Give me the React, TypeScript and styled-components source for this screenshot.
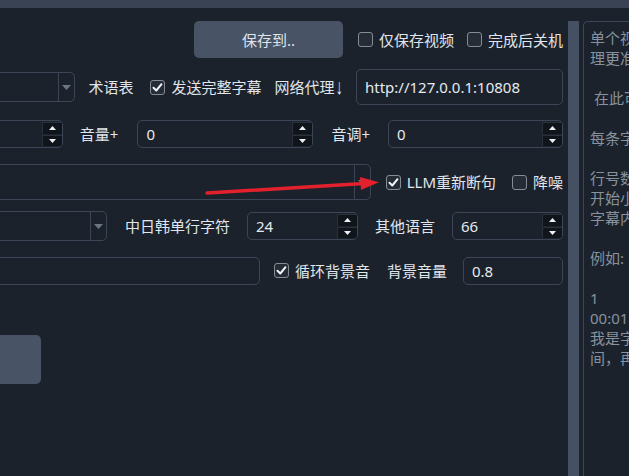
import React from "react";
import styled, { createGlobalStyle } from "styled-components";

const FONT = `"Noto Sans", "Noto Sans CJK SC", sans-serif`;

const Global = createGlobalStyle`
  html, body { margin: 0; padding: 0; background: #1b222c; overflow: hidden; }
  * { box-sizing: border-box; }
`;

const Page = styled.div`
  position: relative;
  width: 629px;
  height: 476px;
  overflow: hidden;
  background: #1b222c;
  font-family: ${FONT};
  font-size: 15px;
  color: #e1e6ec;
`;

const TopBar = styled.div`
  height: 8px;
  background: #3a4353;
`;

const Main = styled.div`
  display: flex;
  height: 468px;
  padding-top: 13px;
`;

const LeftPanel = styled.div`
  margin-left: -20px;
  width: 583px;
  flex: none;
  display: flex;
  flex-direction: column;
`;

const Row = styled.div<{ $h: number; $mt?: number }>`
  display: flex;
  align-items: center;
  height: ${(p) => p.$h}px;
  margin-top: ${(p) => p.$mt ?? 0}px;
`;

const Spacer = styled.div`
  flex: 1;
`;

const Button = styled.div<{ $w: number; $h: number; $ml?: number }>`
  width: ${(p) => p.$w}px;
  height: ${(p) => p.$h}px;
  margin-left: ${(p) => p.$ml ?? 0}px;
  background: #485365;
  border-radius: 5px;
  display: flex;
  align-items: center;
  justify-content: center;
  color: #dfe4ea;
  flex: none;
`;

const Label = styled.span<{ $ml?: number }>`
  margin-left: ${(p) => p.$ml ?? 0}px;
  white-space: nowrap;
  line-height: 20px;
  flex: none;
  display: flex;
  align-items: center;
`;

const NarrowGlyph = styled.span`
  display: inline-block;
  font-family: "Liberation Sans", sans-serif;
  font-size: 15px;
  line-height: 20px;
  margin-left: 1px;
  transform: scaleY(1.45) translateY(-0.5px);
`;

const CheckWrap = styled.label<{ $ml?: number }>`
  display: flex;
  align-items: center;
  gap: 6px;
  margin-left: ${(p) => p.$ml ?? 0}px;
  white-space: nowrap;
  line-height: 20px;
  flex: none;
`;

const Box = styled.span`
  width: 15px;
  height: 15px;
  border: 1px solid #868c95;
  border-radius: 3px;
  background: #252c36;
  display: flex;
  align-items: center;
  justify-content: center;
`;

const Field = styled.div<{ $w?: number; $h: number; $ml?: number }>`
  ${(p) => (p.$w ? `width: ${p.$w}px; flex: none;` : `flex: 1;`)}
  height: ${(p) => p.$h}px;
  margin-left: ${(p) => p.$ml ?? 0}px;
  border: 1px solid #3c4656;
  border-radius: 5px;
  display: flex;
  align-items: stretch;
  overflow: hidden;
`;

const FieldText = styled.div`
  flex: 1;
  display: flex;
  align-items: center;
  padding-left: 8px;
  white-space: nowrap;
  color: #e6eaef;
`;

const DropPart = styled.div`
  width: 16px;
  border-left: 1px solid #3c4656;
  display: flex;
  align-items: center;
  justify-content: center;
`;

const SpinCol = styled.div`
  width: 20px;
  display: flex;
  flex-direction: column;
  justify-content: center;
  gap: 1px;
  padding: 1px 0;
`;

const SpinBtn = styled.div`
  flex: 1;
  background: #10151b;
  border-top: 1px solid #2a313b;
  border-left: 1px solid #2a313b;
  display: flex;
  align-items: center;
  justify-content: center;
`;

const Splitter = styled.div`
  width: 11px;
  margin-left: 5px;
  background: #465063;
  flex: none;
`;

const TextPanel = styled.div`
  margin-left: 4px;
  flex: 1;
  min-width: 0;
  border: 1px solid #3c4656;
  border-right: none;
  border-bottom: none;
  border-radius: 5px 0 0 0;
  padding: 6px 0 0 6px;
  color: #88929e;
  white-space: pre;
  line-height: 20px;
  overflow: hidden;
`;

const Overlay = styled.svg`
  position: absolute;
  left: 0;
  top: 0;
  pointer-events: none;
`;

const Check = ({ checked, children, ml }: { checked?: boolean; children: React.ReactNode; ml?: number }) => (
  <CheckWrap $ml={ml}>
    <Box>
      {checked && (
        <svg width="11" height="11" viewBox="0 0 11 11">
          <path d="M1.5 5.8 L4.3 8.5 L9.5 2.2" stroke="#f2f4f6" strokeWidth="2" fill="none" strokeLinecap="round" strokeLinejoin="round" />
        </svg>
      )}
    </Box>
    <span>{children}</span>
  </CheckWrap>
);

const Combo = ({ h, ml, w, text }: { h: number; ml?: number; w?: number; text?: string }) => (
  <Field $h={h} $ml={ml} $w={w}>
    <FieldText>{text}</FieldText>
    <DropPart>
      <svg width="9" height="5" viewBox="0 0 9 5">
        <path d="M0 0 L9 0 L4.5 5 Z" fill="#6c7584" />
      </svg>
    </DropPart>
  </Field>
);

const Spin = ({ h, ml, w, text }: { h: number; ml?: number; w?: number; text?: string }) => (
  <Field $h={h} $ml={ml} $w={w}>
    <FieldText>{text}</FieldText>
    <SpinCol>
      <SpinBtn>
        <svg width="7" height="4" viewBox="0 0 7 4">
          <path d="M0 4 L7 4 L3.5 0 Z" fill="#eef1f4" />
        </svg>
      </SpinBtn>
      <SpinBtn>
        <svg width="7" height="4" viewBox="0 0 7 4">
          <path d="M0 0 L7 0 L3.5 4 Z" fill="#eef1f4" />
        </svg>
      </SpinBtn>
    </SpinCol>
  </Field>
);

const panelText = [
  "单个视频翻译时，可在此处粘贴已有字幕，使处",
  "理更准确",
  "",
  " 在此可粘贴或拖入srt格式字幕",
  "",
  "每条字幕由以下几部分组成",
  "",
  "行号数字，从1开始",
  "开始小时:分钟:秒,毫秒 --> 结束时间",
  "字幕内容",
  "",
  "例如:",
  "",
  "1",
  "00:01:01,200 --> 00:01:03,500",
  "我是字幕内容，中间可以换行，持续两秒时",
  "间，再出现下一条",
].join("\n");

export default function App() {
  return (
    <Page>
      <Global />
      <TopBar />
      <Main>
        <LeftPanel>
          <Row $h={37}>
            <Spacer />
            <Button $w={149} $h={37}>保存到..</Button>
            <Check ml={15}>仅保存视频</Check>
            <Check ml={13}>完成后关机</Check>
          </Row>
          <Row $h={36} $mt={11}>
            <Combo h={30} />
            <Label $ml={13}>术语表</Label>
            <Check ml={17} checked>发送完整字幕</Check>
            <Label $ml={13}>
              网络代理<NarrowGlyph>↓</NarrowGlyph>
            </Label>
            <Field $w={207} $h={36} $ml={13}>
              <FieldText>http://127.0.0.1:10808</FieldText>
            </Field>
          </Row>
          <Row $h={28} $mt={15}>
            <Spin h={28} />
            <Label $ml={17}>音量+</Label>
            <Spin h={28} w={176} ml={19} text="0" />
            <Label $ml={18}>音调+</Label>
            <Spin h={28} w={175} ml={18} text="0" />
          </Row>
          <Row $h={36} $mt={16}>
            <Combo h={36} />
            <Check ml={15} checked>LLM重新断句</Check>
            <Check ml={16}>降噪</Check>
          </Row>
          <Row $h={30} $mt={11}>
            <Combo h={30} />
            <Label $ml={18}>中日韩单行字符</Label>
            <Spin h={28} w={111} ml={17} text="24" />
            <Label $ml={17}>其他语言</Label>
            <Spin h={28} w={111} ml={17} text="66" />
          </Row>
          <Row $h={29} $mt={15}>
            <Field $h={28}>
              <FieldText />
            </Field>
            <Check ml={14} checked>循环背景音</Check>
            <Label $ml={17}>背景音量</Label>
            <Field $w={100} $h={28} $ml={16}>
              <FieldText>0.8</FieldText>
            </Field>
          </Row>
          <Row $h={49} $mt={50}>
            <Button $w={61} $h={49} />
            <Spacer />
          </Row>
        </LeftPanel>
        <Splitter />
        <TextPanel>{panelText}</TextPanel>
      </Main>
      <Overlay width="629" height="476" viewBox="0 0 629 476">
        <line x1="207" y1="193" x2="364" y2="183.5" stroke="#e3202b" strokeWidth="3.5" strokeLinecap="round" />
        <path d="M360 177 L379 182.3 L361 190 Z" fill="#e3202b" />
      </Overlay>
    </Page>
  );
}
